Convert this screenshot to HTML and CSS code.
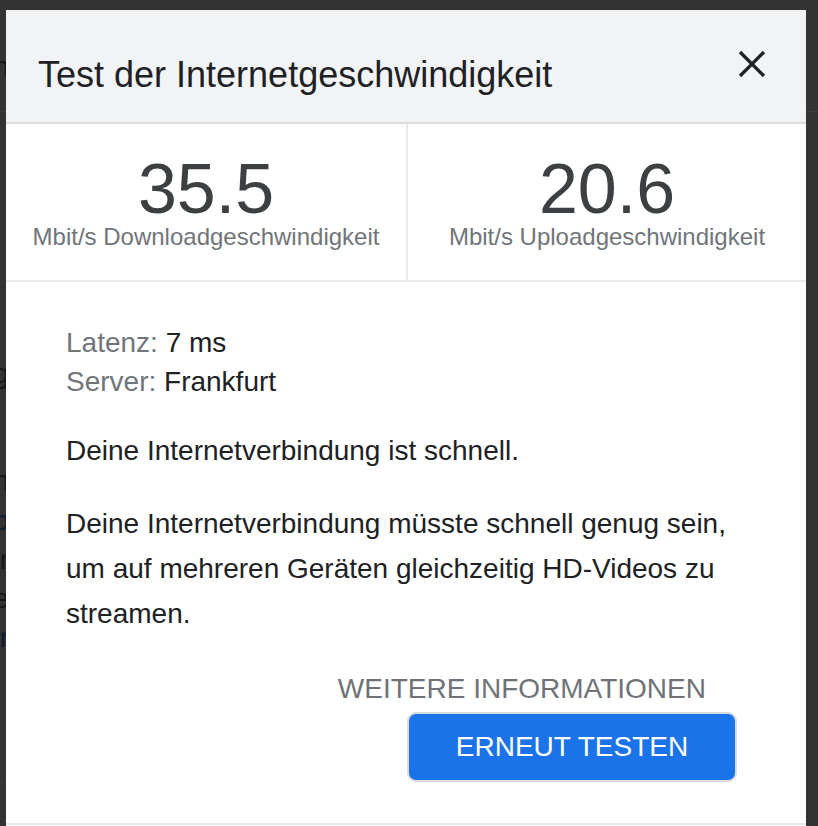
FILE: index.html
```html
<!DOCTYPE html>
<html lang="de">
<head>
<meta charset="utf-8">
<title>Test der Internetgeschwindigkeit</title>
<link rel="stylesheet" href="styles.css">
</head>
<body>
<div class="under" aria-hidden="true">
  <div class="under-top">
    <div class="peek peek-first"><span>n</span></div>
  </div>
  <div class="peek peek-g"><span>g</span></div>
  <div class="peek-group">
    <div class="peek"><span>n</span></div>
    <div class="peek link"><span>b</span></div>
    <div class="peek"><span>r</span></div>
    <div class="peek"><span>e</span></div>
    <div class="peek link"><span>r</span></div>
  </div>
  <div class="under-bottom"></div>
</div>

<div class="modal" role="dialog" aria-labelledby="dlg-title">
  <header class="modal-header">
    <h1 class="modal-title" id="dlg-title">Test der Internetgeschwindigkeit</h1>
    <button class="close" aria-label="Schließen">
      <svg width="28" height="28" viewBox="0 0 28 28" aria-hidden="true">
        <path d="M2 2 L26 26 M26 2 L2 26" stroke="#202124" stroke-width="3.2" fill="none"/>
      </svg>
    </button>
  </header>

  <section class="stats">
    <div class="stat">
      <div class="stat-value">35.5</div>
      <div class="stat-label">Mbit/s Downloadgeschwindigkeit</div>
    </div>
    <div class="stat">
      <div class="stat-value">20.6</div>
      <div class="stat-label">Mbit/s Uploadgeschwindigkeit</div>
    </div>
  </section>

  <section class="content">
    <div class="meta">
      <div><span class="k">Latenz:</span> <span class="v">7 ms</span></div>
      <div><span class="k">Server:</span> <span class="v">Frankfurt</span></div>
    </div>
    <p class="text">Deine Internetverbindung ist schnell.</p>
    <p class="text">Deine Internetverbindung müsste schnell genug sein, um auf mehreren Geräten gleichzeitig HD-Videos zu streamen.</p>
    <div class="actions">
      <a class="more" href="#">Weitere Informationen</a>
      <button class="btn">Erneut testen</button>
    </div>
  </section>
  <div class="modal-footer"></div>
</div>
</body>
</html>
```

FILE: styles.css
```css
html, body {
  margin: 0;
  padding: 0;
}

body {
  background: #333333;
  font-family: "Liberation Sans", Arial, sans-serif;
  height: 826px;
  overflow: hidden;
  position: relative;
}

/* underlying page, dimmed */
.under {
  font-size: 28px;
  line-height: 39.3px;
  color: #161616;
}

.under-top {
  height: 111px;
  border-bottom: 1px solid #3c3c3c;
}

.peek {
  width: 6px;
  overflow: hidden;
  display: flex;
  justify-content: flex-end;
  white-space: nowrap;
}

.peek span {
  flex: none;
  margin-right: -3px;
}

.peek.link {
  color: #0d1d31;
}

.peek-first {
  padding-top: 47px;
}

.peek-g {
  margin-top: 242px;
}

.peek-group {
  margin-top: 68px;
}

.under-bottom {
  margin-top: 124px;
  width: 6px;
  border-top: 1px solid #3c3c3c;
}

/* dialog */
.modal {
  position: absolute;
  left: 6px;
  top: 10px;
  width: 800px;
  height: 830px;
  background: #ffffff;
}

.modal-header {
  height: 114px;
  box-sizing: border-box;
  background: #f1f3f4;
  border-bottom: 2px solid #dadce0;
  display: flex;
  justify-content: space-between;
  align-items: flex-start;
  padding: 45px 40px 0 32px;
}

.modal-title {
  margin: 0;
  font-size: 36px;
  font-weight: 400;
  line-height: 40px;
  color: #202124;
}

.close {
  margin-top: -5px;
  width: 28px;
  height: 28px;
  padding: 0;
  border: 0;
  background: transparent;
  display: block;
}

.close svg {
  display: block;
}

.stats {
  display: grid;
  grid-template-columns: 1fr 1fr;
  border-bottom: 2px solid #e8eaed;
}

.stat {
  padding: 30px 0 29px;
  text-align: center;
}

.stat + .stat {
  border-left: 2px solid #e8eaed;
}

.stat-value {
  font-size: 70px;
  line-height: 70px;
  color: #3c4043;
}

.stat-label {
  margin-top: -1px;
  font-size: 24px;
  line-height: 28px;
  color: #70757a;
}

.content {
  padding: 41px 60px 0;
}

.meta {
  font-size: 28px;
  line-height: 39.2px;
}

.meta .k {
  color: #70757a;
}

.meta .v {
  color: #202124;
}

.text {
  margin: 28px 0 0;
  font-size: 28px;
  line-height: 44.8px;
  color: #202124;
}

.actions {
  display: flex;
  flex-direction: column;
  align-items: flex-end;
}

.more {
  margin: 36px 40px 0 0;
  font-size: 28px;
  line-height: 32px;
  color: #6f7378;
  text-decoration: none;
  text-transform: uppercase;
}

.btn {
  margin: 7px 9px 0 0;
  width: 330px;
  height: 70px;
  box-sizing: border-box;
  border: 2px solid #dadce0;
  border-radius: 9px;
  background: #1a73e8;
  color: #ffffff;
  font-family: "Liberation Sans", Arial, sans-serif;
  font-size: 28px;
  text-transform: uppercase;
  padding: 0;
}

.modal-footer {
  margin-top: 41px;
  border-top: 2px solid #e8eaed;
  height: 20px;
}
```
